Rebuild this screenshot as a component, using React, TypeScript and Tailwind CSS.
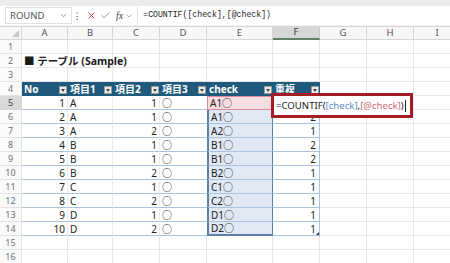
import React from "react";
import { X, Check, ChevronDown } from "lucide-react";

const colLetters = ["A", "B", "C", "D", "E", "F", "G", "H", "I"];
const bVals = ["A", "A", "A", "B", "B", "B", "C", "C", "D", "D"];
const cVals = [1, 1, 2, 1, 1, 2, 1, 2, 1, 2];

const data = bVals.map((b, i) => {
  const e = `${b}${cVals[i]}○`;
  return { a: i + 1, b, c: cVals[i], d: "○", e };
});
const counts: Record<string, number> = {};
data.forEach((d) => (counts[d.e] = (counts[d.e] || 0) + 1));

function Dd() {
  return (
    <span className="ml-auto mr-[1px] mb-[1px] self-end flex h-[8px] w-[8px] items-center justify-center border border-[#9a9a9a] bg-[#ededed]">
      <span className="h-0 w-0 border-l-[2px] border-r-[2px] border-t-[3px] border-l-transparent border-r-transparent border-t-[#444]" />
    </span>
  );
}

function HeaderCell({ label }: { label: string }) {
  return (
    <div className="flex items-center bg-[#1f5a7c] border-b border-[#1f5a7c] pl-[2px] text-[10px] font-bold text-white overflow-hidden whitespace-nowrap">
      <span className="leading-none">{label}</span>
      <Dd />
    </div>
  );
}

export default function App() {
  const rows: React.ReactNode[] = [];
  for (let r = 1; r <= 16; r++) {
    const active = r === 5;
    rows.push(
      <div
        key={`rh${r}`}
        className={
          active
            ? "flex items-center justify-center border-r border-b border-[#d4d4d4] bg-[#d9d9d9] text-[9px] text-[#3b3b3b]"
            : "flex items-center justify-center border-r border-b border-[#e3e3e3] bg-[#fafafa] text-[9px] text-[#707070]"
        }
      >
        {r}
      </div>
    );
    for (let c = 0; c < 9; c++) {
      const key = `c${r}-${c}`;
      if (r === 2 && c === 0) {
        rows.push(
          <div key={key} className="relative border-b border-[#e8e8e8]">
            <span className="absolute left-[2px] top-0 whitespace-nowrap text-[10.5px] font-bold leading-[14px] text-[#1a1a1a]">
              ■ テーブル (Sample)
            </span>
          </div>
        );
        continue;
      }
      if (r === 4 && c < 6) {
        const labels = ["No", "項目1", "項目2", "項目3", "check", "重複"];
        rows.push(<HeaderCell key={key} label={labels[c]} />);
        continue;
      }
      if (r >= 5 && r <= 14 && c < 6) {
        const d = data[r - 5];
        const base = "flex items-center overflow-hidden whitespace-nowrap text-[10px] leading-none text-[#222] border-b border-[#a9c4e0]";
        if (c === 0)
          rows.push(<div key={key} className={`${base} justify-end pr-[2px] border-r border-r-[#ececec]`}>{d.a}</div>);
        else if (c === 1)
          rows.push(<div key={key} className={`${base} pl-[2px] border-r border-r-[#ececec]`}>{d.b}</div>);
        else if (c === 2)
          rows.push(<div key={key} className={`${base} justify-end pr-[2px] border-r border-r-[#ececec]`}>{d.c}</div>);
        else if (c === 3)
          rows.push(<div key={key} className={`${base} pl-[2px]`}>{d.d}</div>);
        else if (c === 4) {
          if (r === 5)
            rows.push(
              <div key={key} className="flex items-center pl-[2px] text-[10px] leading-none text-[#222] bg-[#f6dde2] border border-[#e08b9c]">
                {d.e}
              </div>
            );
          else
            rows.push(
              <div
                key={key}
                className={
                  r === 14
                    ? "flex items-center pl-[2px] text-[10px] leading-none text-[#222] bg-[#dfe8f3] border-l-2 border-r border-b-2 border-[#5b82ad]"
                    : "flex items-center pl-[2px] text-[10px] leading-none text-[#222] bg-[#dfe8f3] border-l-2 border-r border-[#5b82ad] border-b border-b-[#a9c4e0]"
                }
              >
                {d.e}
              </div>
            );
        } else {
          rows.push(
            <div key={key} className={`${base} relative justify-end pr-[3px] border-r border-r-[#a9c4e0]`}>
              {r === 5 ? null : counts[d.e]}
              {r === 14 && (
                <span className="absolute bottom-0 right-0 h-0 w-0 border-l-[3px] border-t-[3px] border-l-transparent border-t-transparent border-r-[0px] border-b-[3px] border-b-[#333]" />
              )}
            </div>
          );
        }
        continue;
      }
      rows.push(<div key={key} className="border-r border-b border-[#e6e6e6]" />);
    }
  }

  return (
    <div
      className="relative h-[263px] w-[450px] overflow-hidden bg-white"
      style={{ fontFamily: '"Noto Sans", "Noto Sans CJK JP", sans-serif' }}
    >
      {/* formula bar */}
      <div className="h-[6px] bg-[#ececec]" />
      <div className="flex h-[19px] items-center bg-white">
        <div className="ml-[5px] flex h-[17px] w-[67px] items-center border border-[#e0e0e0] bg-white pl-[4px] pr-[3px]">
          <span className="text-[9.5px] leading-none text-[#555]">ROUND</span>
          <ChevronDown className="ml-auto h-[9px] w-[9px] text-[#777]" strokeWidth={2} />
        </div>
        <span className="ml-[2px] w-[6px] text-center text-[10px] leading-none text-[#666]">⁝</span>
        <X className="ml-[6px] h-[11px] w-[11px] text-[#d13b3b]" strokeWidth={2} />
        <Check className="ml-[3px] h-[11px] w-[11px] text-[#7a9a80]" strokeWidth={2} />
        <span
          className="ml-[5px] text-[10px] italic leading-none text-[#444]"
          style={{ fontFamily: '"Liberation Serif", serif' }}
        >
          fx
        </span>
        <ChevronDown className="ml-[2px] h-[8px] w-[8px] text-[#888]" strokeWidth={2} />
        <div className="ml-[4px] flex h-[17px] flex-1 items-center border-l border-[#e0e0e0] bg-white pl-[5px]">
          <span
            className="whitespace-nowrap text-[8.2px] leading-none text-[#222]"
            style={{ fontFamily: '"Liberation Mono", monospace' }}
          >
            =COUNTIF([check],[@check])
          </span>
        </div>
      </div>
      <div className="h-[2px] border-b border-[#d6d6d6] bg-[#f3f3f3]" />

      {/* grid */}
      <div className="grid grid-cols-[22px_46px_45px_47px_47px_66px_47px_47px_47px_47px] auto-rows-[14px] grid-rows-[13px]">
        <div className="relative border-r border-b border-[#d6d6d6] bg-[#f7f7f7]">
          <span className="absolute bottom-[2px] right-[2px] h-0 w-0 border-l-[7px] border-b-[7px] border-l-transparent border-b-[#c8c8c8]" />
        </div>
        {colLetters.map((l) => (
          <div
            key={l}
            className={
              l === "F"
                ? "flex items-center justify-center border-r border-b-2 border-[#c9c9c9] border-b-[#5e7f66] bg-[#d6d6d6] text-[9.5px] text-[#3a3a3a]"
                : "flex items-center justify-center border-r border-b border-[#d6d6d6] bg-[#f7f7f7] text-[9.5px] text-[#555]"
            }
          >
            {l}
          </div>
        ))}
        {rows}
      </div>

      {/* in-cell editing box */}
      <div className="absolute left-[271px] top-[93px] flex h-[25px] w-[142px] items-center border-[3px] border-[#a51d24] bg-white pl-[2px]">
        <span className="whitespace-nowrap text-[9.6px] leading-none text-[#1a1a1a]">
          =COUNTIF(<span className="text-[#5b8fd0]">[check]</span>,<span className="text-[#d06a7a]">[@check]</span>)
        </span>
        <span className="ml-[1px] h-[12px] w-[1px] bg-[#222]" />
      </div>
    </div>
  );
}
